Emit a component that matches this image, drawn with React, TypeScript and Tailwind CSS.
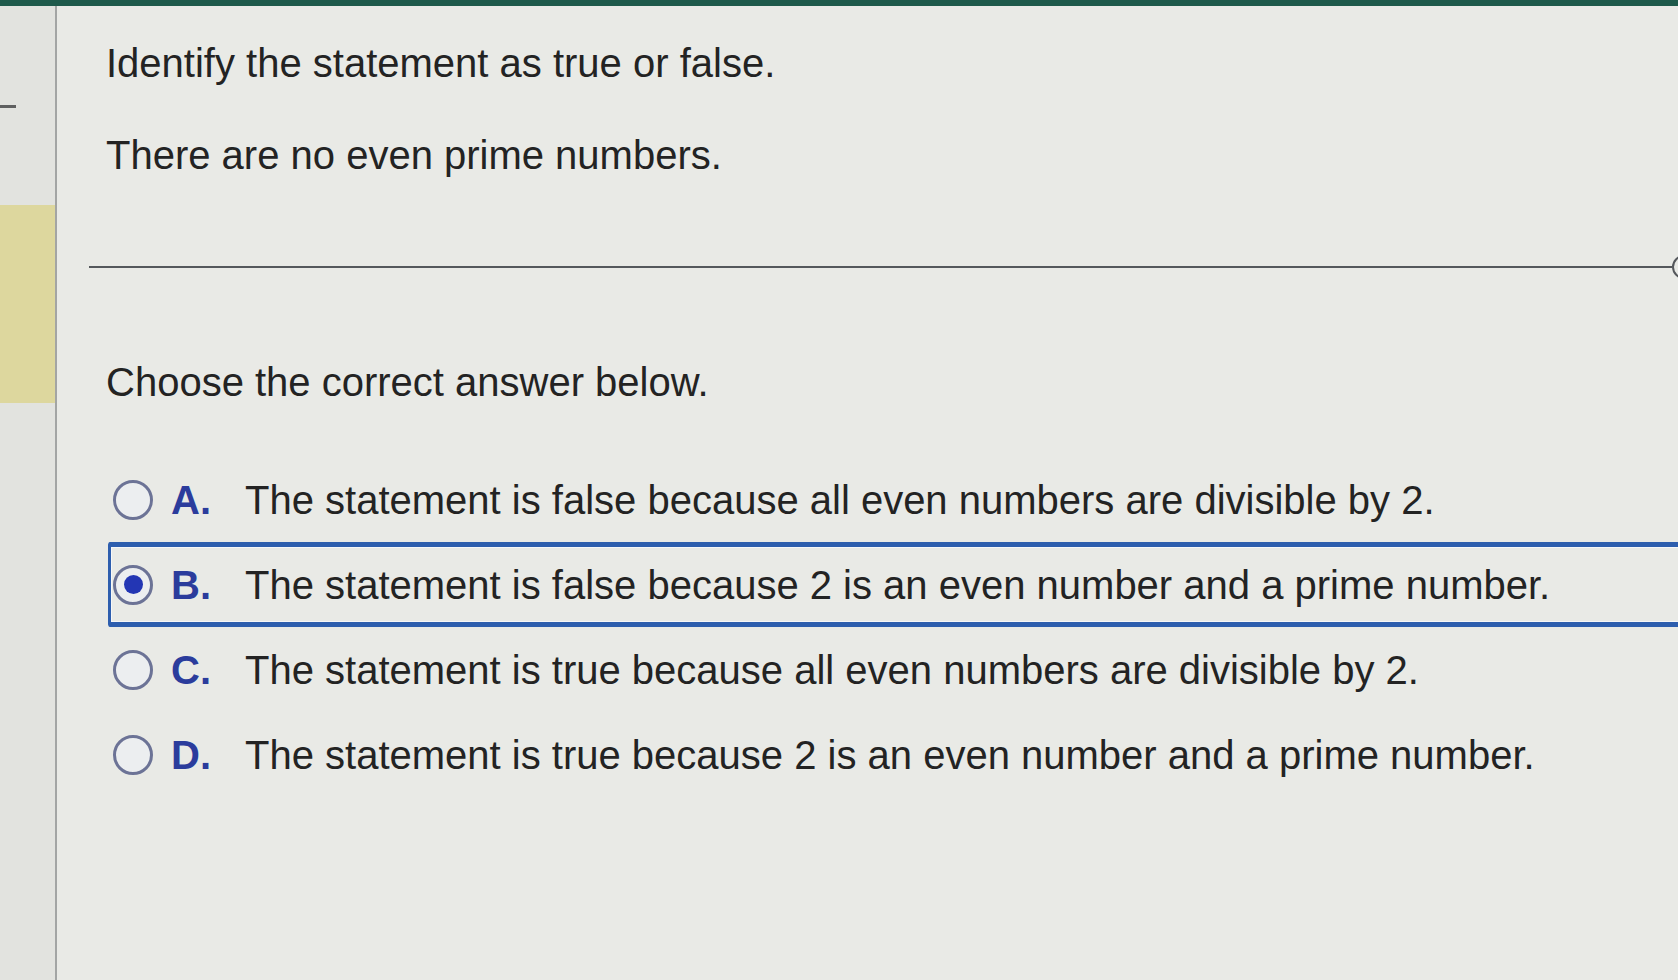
import { type ReactNode } from 'react'

type Option = { key: string; text: string }

const OPTIONS: Option[] = [
  { key: 'A', text: 'The statement is false because all even numbers are divisible by 2.' },
  { key: 'B', text: 'The statement is false because 2 is an even number and a prime number.' },
  { key: 'C', text: 'The statement is true because all even numbers are divisible by 2.' },
  { key: 'D', text: 'The statement is true because 2 is an even number and a prime number.' },
]

const SELECTED = 'B'

function Radio({ checked }: { checked: boolean }) {
  return (
    <span className="flex h-[40px] w-[40px] shrink-0 items-center justify-center rounded-full border-[3px] border-[#6c7396] bg-[#eceef0]">
      {checked && <span className="h-[19px] w-[19px] rounded-full bg-[#2336b4]" />}
    </span>
  )
}

function Line({ children, className = '' }: { children: ReactNode; className?: string }) {
  return <p className={`pl-[17px] text-[40px] leading-[48px] text-[#232323] ${className}`}>{children}</p>
}

export default function App() {
  return (
    <div className="h-[980px] w-[1678px] overflow-hidden bg-[#e9eae6] font-['Liberation_Sans',Arial,sans-serif]">
      <div className="h-[6px] bg-[#1e5a4b]" />
      <div className="flex h-[974px]">
        {/* left rail */}
        <aside className="flex w-[57px] shrink-0 flex-col border-r-2 border-[#a3a5a4] bg-[#e2e3df]">
          <div className="mt-[99px] h-[3px] w-[16px] bg-[#5f6060]" />
          <div className="mt-[97px] h-[198px] w-full bg-[#ddd79e]" />
        </aside>

        <main className="flex min-w-0 flex-1 flex-col overflow-hidden pl-[32px]">
          <Line className="mt-[33px]">Identify the statement as true or false.</Line>
          <Line className="mt-[44px]">There are no even prime numbers.</Line>

          {/* divider with handle */}
          <div className="mt-[76px] flex items-center">
            <div className="h-[2px] flex-1 bg-[#55585c]" />
            <span className="-mr-[18px] h-[24px] w-[24px] shrink-0 rounded-full border-2 border-[#55585c]" />
          </div>

          <Line className="mt-[79px]">Choose the correct answer below.</Line>

          <div className="mt-[51px] flex flex-col pl-[19px]">
            {OPTIONS.map((o) => {
              const on = o.key === SELECTED
              return (
                <div
                  key={o.key}
                  className={`flex h-[85px] w-[1620px] items-center rounded-[3px] border-y-[5px] border-l-[3px] pl-[2px] ${
                    on
                      ? 'border-[#2d5eae] shadow-[inset_0_0_0_1px_#f6f7f8]'
                      : 'border-transparent'
                  }`}
                >
                  <Radio checked={on} />
                  <span className="ml-[18px] w-[74px] shrink-0 text-[40px] font-bold leading-none text-[#2b3c9c]">
                    {o.key}.
                  </span>
                  <span className="whitespace-nowrap text-[40px] leading-none text-[#232323]">{o.text}</span>
                </div>
              )
            })}
          </div>
        </main>
      </div>
    </div>
  )
}
